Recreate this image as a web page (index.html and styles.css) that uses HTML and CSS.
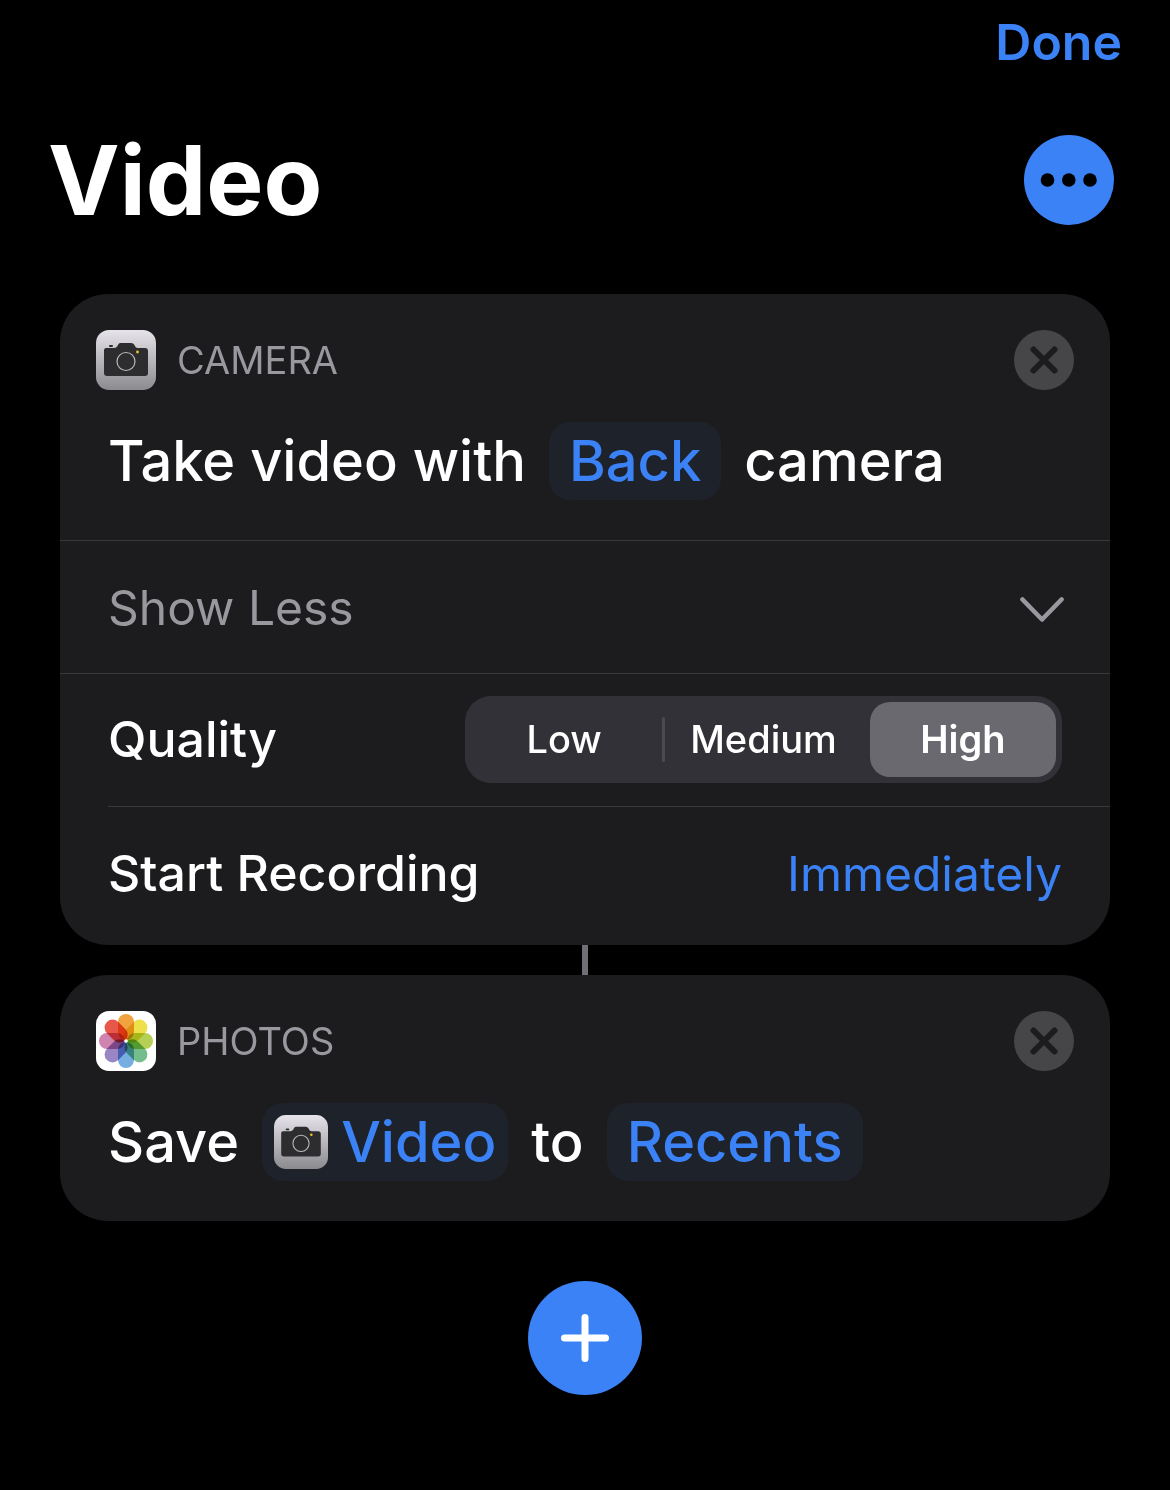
FILE: index.html
```html
<!DOCTYPE html>
<html lang="en">
<head>
    <meta charset="UTF-8">
    <meta name="viewport" content="width=device-width, initial-scale=1.0">
    <title>Video</title>
    <link rel="stylesheet" href="styles.css">
</head>
<body>
    <!-- shared icons -->
    <svg class="sprite" aria-hidden="true">
        <defs>
            <linearGradient id="camera-bg" x1="0" y1="0" x2="0" y2="1">
                <stop offset="0" stop-color="#e6e4ea"/>
                <stop offset="1" stop-color="#8b8a8f"/>
            </linearGradient>
        </defs>
        <symbol id="icon-camera" viewBox="0 0 60 60">
            <rect width="60" height="60" rx="13" fill="url(#camera-bg)"/>
            <rect x="13" y="15" width="4" height="2" rx="1" fill="#2d2d2f"/>
            <path d="M10 18h8c2 0 3-1 4-3s2-2 3-2h10c2 0 3 1 4 3s2 2 4 2h6c2 0 3 1 3 3v22c0 2-1 3-3 3H11c-2 0-3-1-3-3V20c0-1 1-2 2-2z" fill="#2d2d2f"/>
            <circle cx="30" cy="31.5" r="9" fill="none" stroke="#b9b8bc" stroke-width="1.2"/>
            <circle cx="41.5" cy="22" r="1.4" fill="#f5c52c"/>
        </symbol>
        <symbol id="icon-close" viewBox="0 0 60 60">
            <circle cx="30" cy="30" r="30" fill="#464648"/>
            <path d="M19.5 19.5l21 21M40.5 19.5l-21 21" stroke="#1c1c1e" stroke-width="6" stroke-linecap="round"/>
        </symbol>
    </svg>

    <header class="header">
        <nav class="nav">
            <button type="button" class="done-button">Done</button>
        </nav>
        <div class="title-row">
            <h1 class="title">Video</h1>
            <button type="button" class="icon-button more-button" aria-label="More">
                <svg viewBox="0 0 90 90">
                    <circle cx="45" cy="45" r="45" fill="#3b82f7"/>
                    <circle cx="23.5" cy="45" r="6.8"/>
                    <circle cx="44.8" cy="45" r="6.8"/>
                    <circle cx="66" cy="45" r="6.8"/>
                </svg>
            </button>
        </div>
    </header>

    <main class="actions">
        <section class="card">
            <div class="card-header">
                <svg class="app-icon"><use href="#icon-camera"/></svg>
                <h2 class="app-name">CAMERA</h2>
                <button type="button" class="icon-button close-button" aria-label="Remove camera action">
                    <svg><use href="#icon-close"/></svg>
                </button>
            </div>
            <div class="sentence">
                <span>Take video with</span>
                <button type="button" class="token">Back</button>
                <span>camera</span>
            </div>
            <button type="button" class="row show-less" aria-expanded="true">
                <span>Show Less</span>
                <svg class="chevron" viewBox="0 0 44 32">
                    <path d="M2.5 8.5l19.5 20 19.5-20" fill="none" stroke="#98989e" stroke-width="4.6" stroke-linecap="round" stroke-linejoin="round"/>
                </svg>
            </button>
            <div class="row quality">
                <span id="quality-label">Quality</span>
                <div class="segmented" role="radiogroup" aria-labelledby="quality-label">
                    <label class="segment">
                        <input type="radio" name="quality" value="low">
                        <span>Low</span>
                    </label>
                    <i class="separator"></i>
                    <label class="segment">
                        <input type="radio" name="quality" value="medium">
                        <span>Medium</span>
                    </label>
                    <i class="separator hidden"></i>
                    <label class="segment">
                        <input type="radio" name="quality" value="high" checked>
                        <span>High</span>
                    </label>
                </div>
            </div>
            <div class="row recording">
                <span id="recording-label">Start Recording</span>
                <button type="button" class="value-button" aria-describedby="recording-label">Immediately</button>
            </div>
        </section>

        <div class="connector"></div>

        <section class="card">
            <div class="card-header">
                <svg class="app-icon" viewBox="0 0 60 60">
                    <rect width="60" height="60" rx="13" fill="#fff"/>
                    <g class="petals">
                        <rect x="22" y="3" width="16" height="26" rx="8" fill="#f0a33f"/>
                        <rect x="22" y="3" width="16" height="26" rx="8" fill="#eee04a" transform="rotate(45 30 30)"/>
                        <rect x="22" y="3" width="16" height="26" rx="8" fill="#b5d055" transform="rotate(90 30 30)"/>
                        <rect x="22" y="3" width="16" height="26" rx="8" fill="#76bd8e" transform="rotate(135 30 30)"/>
                        <rect x="22" y="3" width="16" height="26" rx="8" fill="#76aee2" transform="rotate(180 30 30)"/>
                        <rect x="22" y="3" width="16" height="26" rx="8" fill="#9a86c4" transform="rotate(225 30 30)"/>
                        <rect x="22" y="3" width="16" height="26" rx="8" fill="#cf84b0" transform="rotate(270 30 30)"/>
                        <rect x="22" y="3" width="16" height="26" rx="8" fill="#e8584a" transform="rotate(315 30 30)"/>
                    </g>
                    <circle cx="30" cy="30" r="1.8" fill="#fff"/>
                </svg>
                <h2 class="app-name">PHOTOS</h2>
                <button type="button" class="icon-button close-button" aria-label="Remove photos action">
                    <svg><use href="#icon-close"/></svg>
                </button>
            </div>
            <div class="sentence">
                <span>Save</span>
                <button type="button" class="token with-icon">
                    <svg class="token-icon"><use href="#icon-camera"/></svg>
                    Video
                </button>
                <span>to</span>
                <button type="button" class="token">Recents</button>
            </div>
        </section>

        <button type="button" class="icon-button add-button" aria-label="Add action">
            <svg viewBox="0 0 114 114">
                <circle cx="57" cy="57" r="57" fill="#3b82f7"/>
                <path d="M57 36.5v41M36.5 57h41" stroke="#fff" stroke-width="7" stroke-linecap="round"/>
            </svg>
        </button>
    </main>
</body>
</html>
```

FILE: styles.css
```css
* {
    box-sizing: border-box;
}
body {
    margin: 0;
    background-color: #000;
    color: #fff;
    font-family: Inter, "Liberation Sans", sans-serif;
}
button {
    margin: 0;
    padding: 0;
    border: none;
    background: none;
    font: inherit;
    color: inherit;
    cursor: pointer;
}
svg {
    display: block;
}
.sprite {
    position: absolute;
    width: 0;
    height: 0;
}
.nav {
    display: flex;
    justify-content: flex-end;
    padding: 12px 48px 0;
}
.done-button {
    font-size: 50px;
    font-weight: 600;
    line-height: 60px;
    color: #3b82f7;
}
.title-row {
    display: flex;
    justify-content: space-between;
    align-items: center;
    padding: 48px 56px 54px 48px;
}
.title {
    margin: 0;
    font-size: 96px;
    font-weight: 700;
    line-height: 120px;
}
.icon-button {
    flex: none;
    border-radius: 50%;
}
.icon-button svg {
    width: 100%;
    height: 100%;
}
.more-button {
    width: 90px;
    height: 90px;
}
.actions {
    display: flex;
    flex-direction: column;
    align-items: center;
    padding: 0 60px 60px;
}
.card {
    width: 100%;
    background-color: #1c1c1e;
    border-radius: 48px;
    overflow: hidden;
}
.card-header {
    display: flex;
    align-items: center;
    gap: 21px;
    padding: 36px 36px 0;
}
.app-icon {
    width: 60px;
    height: 60px;
}
.petals {
    isolation: isolate;
}
.petals rect {
    mix-blend-mode: multiply;
}
.app-name {
    flex: 1;
    margin: 0;
    font-size: 38px;
    font-weight: 400;
    line-height: 60px;
    color: #98989e;
}
.close-button {
    width: 60px;
    height: 60px;
}
.sentence {
    display: flex;
    flex-wrap: wrap;
    align-items: center;
    gap: 23px;
    padding: 32px 48px 40px;
    font-size: 56px;
    font-weight: 500;
    line-height: 78px;
}
.token {
    padding: 0 20px;
    border-radius: 21px;
    background-color: #1e222a;
    color: #3b82f7;
}
.with-icon {
    display: flex;
    align-items: center;
    gap: 13px;
    padding: 0 12px;
}
.token-icon {
    width: 54px;
    height: 54px;
}
.row {
    display: flex;
    justify-content: space-between;
    align-items: center;
    width: 100%;
    min-height: 133px;
    padding: 0 48px;
    border-top: 1px solid #38383a;
    font-size: 50px;
    font-weight: 500;
}
.show-less {
    padding-right: 46px;
    font-size: 48px;
    font-weight: 400;
    color: #98989e;
}
.chevron {
    width: 44px;
    height: 32px;
}
.quality {
    padding-bottom: 2px;
}
.segmented {
    display: flex;
    align-items: center;
    width: 597px;
    padding: 6px;
    border-radius: 26px;
    background-color: #323137;
    font-size: 38px;
}
.segment {
    flex: 1 1 0;
    cursor: pointer;
}
.segment input {
    position: absolute;
    opacity: 0;
}
.segment span {
    display: block;
    border-radius: 20px;
    line-height: 75px;
    text-align: center;
}
.segment input:checked + span {
    background-color: #6a696f;
    font-weight: 600;
}
.separator {
    width: 3px;
    height: 45px;
    margin: 0 5px;
    border-radius: 2px;
    background-color: #4b4a50;
}
.separator.hidden {
    visibility: hidden;
}
.recording {
    min-height: 139px;
    width: auto;
    margin-left: 48px;
    padding: 0 48px 6px 0;
}
.value-button {
    font-size: 48px;
    font-weight: 400;
    color: #3b82f7;
}
.connector {
    width: 6px;
    height: 30px;
    background-color: #6f7076;
}
.add-button {
    width: 114px;
    height: 114px;
    margin-top: 60px;
}
```
